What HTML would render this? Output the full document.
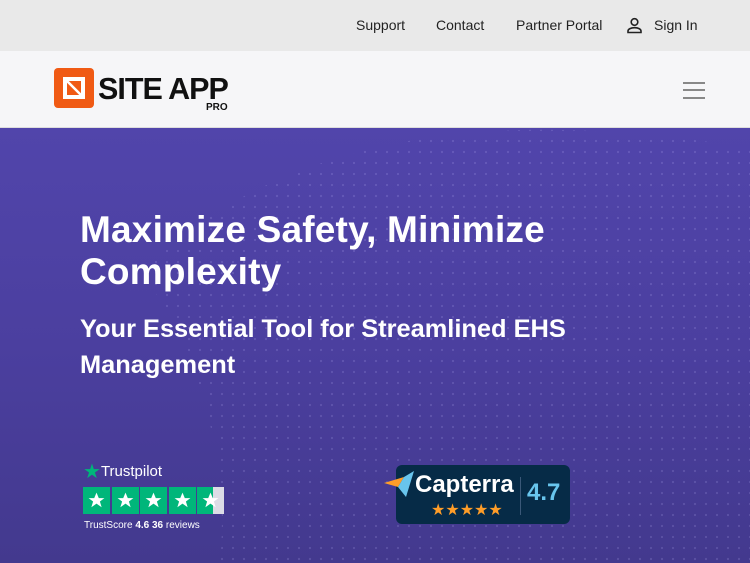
<!DOCTYPE html>
<html><head><meta charset="utf-8"><style>
*{margin:0;padding:0;box-sizing:border-box}
body{width:750px;height:563px;overflow:hidden;font-family:"Liberation Sans",sans-serif;position:relative;background:#4a40a0}
.top{height:51px;background:#e9e9e9;position:relative;font-size:14px;color:#222}
.top span{position:absolute;top:17px}
.nav{height:77px;background:#f6f6f8;position:relative;border-bottom:1px solid #ddd}
.hero{position:absolute;top:128px;left:0;width:750px;height:435px;background:linear-gradient(180deg,#5145ab 0%,#4b3f9f 50%,#43398e 100%);overflow:hidden}
h1{position:absolute;left:80px;top:81px;color:#fff;font-size:37px;line-height:42px;font-weight:bold;letter-spacing:0.2px}
h2{position:absolute;left:80px;top:183px;color:#fff;font-size:25.4px;line-height:36px;font-weight:bold}
.star{display:inline-block;width:27px;height:27px;background:#00b67a;margin-right:1.5px;position:relative;vertical-align:top}
.star svg{position:absolute;left:4px;top:4px}
</style></head><body>
<div class="top">
<span style="left:356px">Support</span>
<span style="left:436px">Contact</span>
<span style="left:516px">Partner Portal</span>
<svg style="position:absolute;left:626px;top:17px" width="17" height="17" viewBox="0 0 17 17" fill="none" stroke="#222" stroke-width="1.6"><circle cx="8.5" cy="5" r="3.3"/><path d="M2 15.5v-1.5c0-2 3-3.3 6.5-3.3s6.5 1.3 6.5 3.3v1.5z"/></svg>
<span style="left:654px">Sign In</span>
</div>
<div class="nav">
<div style="position:absolute;left:54px;top:17px;width:40px;height:40px;background:#f05a14;border-radius:4px">
<svg width="40" height="40" viewBox="0 0 40 40"><path d="M9 9h22v22H9z M13 13v14h14V13z" fill="#fff" fill-rule="evenodd"/><path d="M13 13l14 14" stroke="#fff" stroke-width="2.5"/><path d="M20 13h7v7" fill="none" stroke="#f05a14" stroke-width="0"/></svg>
</div>
<div style="position:absolute;left:98px;top:18px;font-size:30.5px;font-weight:bold;color:#111;letter-spacing:-1px;line-height:40px">SITE APP</div>
<div style="position:absolute;left:206px;top:51px;font-size:10px;font-weight:bold;color:#111">PRO</div>
<div style="position:absolute;left:683px;top:31px;width:22px;height:2px;background:#888"></div>
<div style="position:absolute;left:683px;top:38px;width:22px;height:2px;background:#888"></div>
<div style="position:absolute;left:683px;top:46px;width:22px;height:2px;background:#888"></div>
</div>
<div class="hero">
<svg width="750" height="435" style="position:absolute;left:0;top:0;opacity:.18">
<defs><pattern id="d" width="11" height="11" patternUnits="userSpaceOnUse"><circle cx="2" cy="2" r="1.1" fill="#c8c0ff"/></pattern></defs>
<path d="M140 140 C300 0 500 -20 750 20 L750 435 L220 435 C230 330 200 230 140 140Z" fill="url(#d)"/>
</svg>
<h1>Maximize Safety, Minimize<br>Complexity</h1>
<h2>Your Essential Tool for Streamlined EHS<br>Management</h2>
<div style="position:absolute;left:83px;top:331px;color:#fff;font-size:15px">
<span style="color:#00b67a;font-size:20px;vertical-align:-2px">★</span>Trustpilot</div>
<div style="position:absolute;left:83px;top:359px;height:27px;white-space:nowrap">
<span class="star"><svg width="19" height="19" viewBox="0 0 24 24"><path d="M12 2l2.9 7h7.1l-5.7 4.3 2.2 7.2L12 16l-6.5 4.5 2.2-7.2L2 9h7.1z" fill="#fff"/></svg></span><span class="star"><svg width="19" height="19" viewBox="0 0 24 24"><path d="M12 2l2.9 7h7.1l-5.7 4.3 2.2 7.2L12 16l-6.5 4.5 2.2-7.2L2 9h7.1z" fill="#fff"/></svg></span><span class="star"><svg width="19" height="19" viewBox="0 0 24 24"><path d="M12 2l2.9 7h7.1l-5.7 4.3 2.2 7.2L12 16l-6.5 4.5 2.2-7.2L2 9h7.1z" fill="#fff"/></svg></span><span class="star"><svg width="19" height="19" viewBox="0 0 24 24"><path d="M12 2l2.9 7h7.1l-5.7 4.3 2.2 7.2L12 16l-6.5 4.5 2.2-7.2L2 9h7.1z" fill="#fff"/></svg></span><span class="star" style="background:linear-gradient(90deg,#00b67a 60%,#dcdce6 60%)"><svg width="19" height="19" viewBox="0 0 24 24"><path d="M12 2l2.9 7h7.1l-5.7 4.3 2.2 7.2L12 16l-6.5 4.5 2.2-7.2L2 9h7.1z" fill="#fff"/></svg></span>
</div>
<div style="position:absolute;left:84px;top:392px;color:#fff;font-size:10px">TrustScore <b>4.6</b> <b>36</b> reviews</div>
<div style="position:absolute;left:396px;top:337px;width:174px;height:59px;background:#062b47;border-radius:6px">
<svg style="position:absolute;left:-12px;top:6px" width="32" height="30" viewBox="0 0 32 30"><path d="M0 12L20 6 14 16z" fill="#ff9d28"/><path d="M20 6L30 0 22 26 14 16z" fill="#68c5ed"/></svg>
<div style="position:absolute;left:19px;top:6px;color:#fff;font-size:24px;font-weight:bold">Capterra</div>
<div style="position:absolute;left:35px;top:35px;color:#ff9d28;font-size:16px">★★★★★</div>
<div style="position:absolute;left:124px;top:12px;width:1px;height:38px;background:#3a5878"></div>
<div style="position:absolute;left:131px;top:14px;color:#68c5ed;font-size:24px;font-weight:bold">4.7</div>
</div>
</div>
</body></html>
